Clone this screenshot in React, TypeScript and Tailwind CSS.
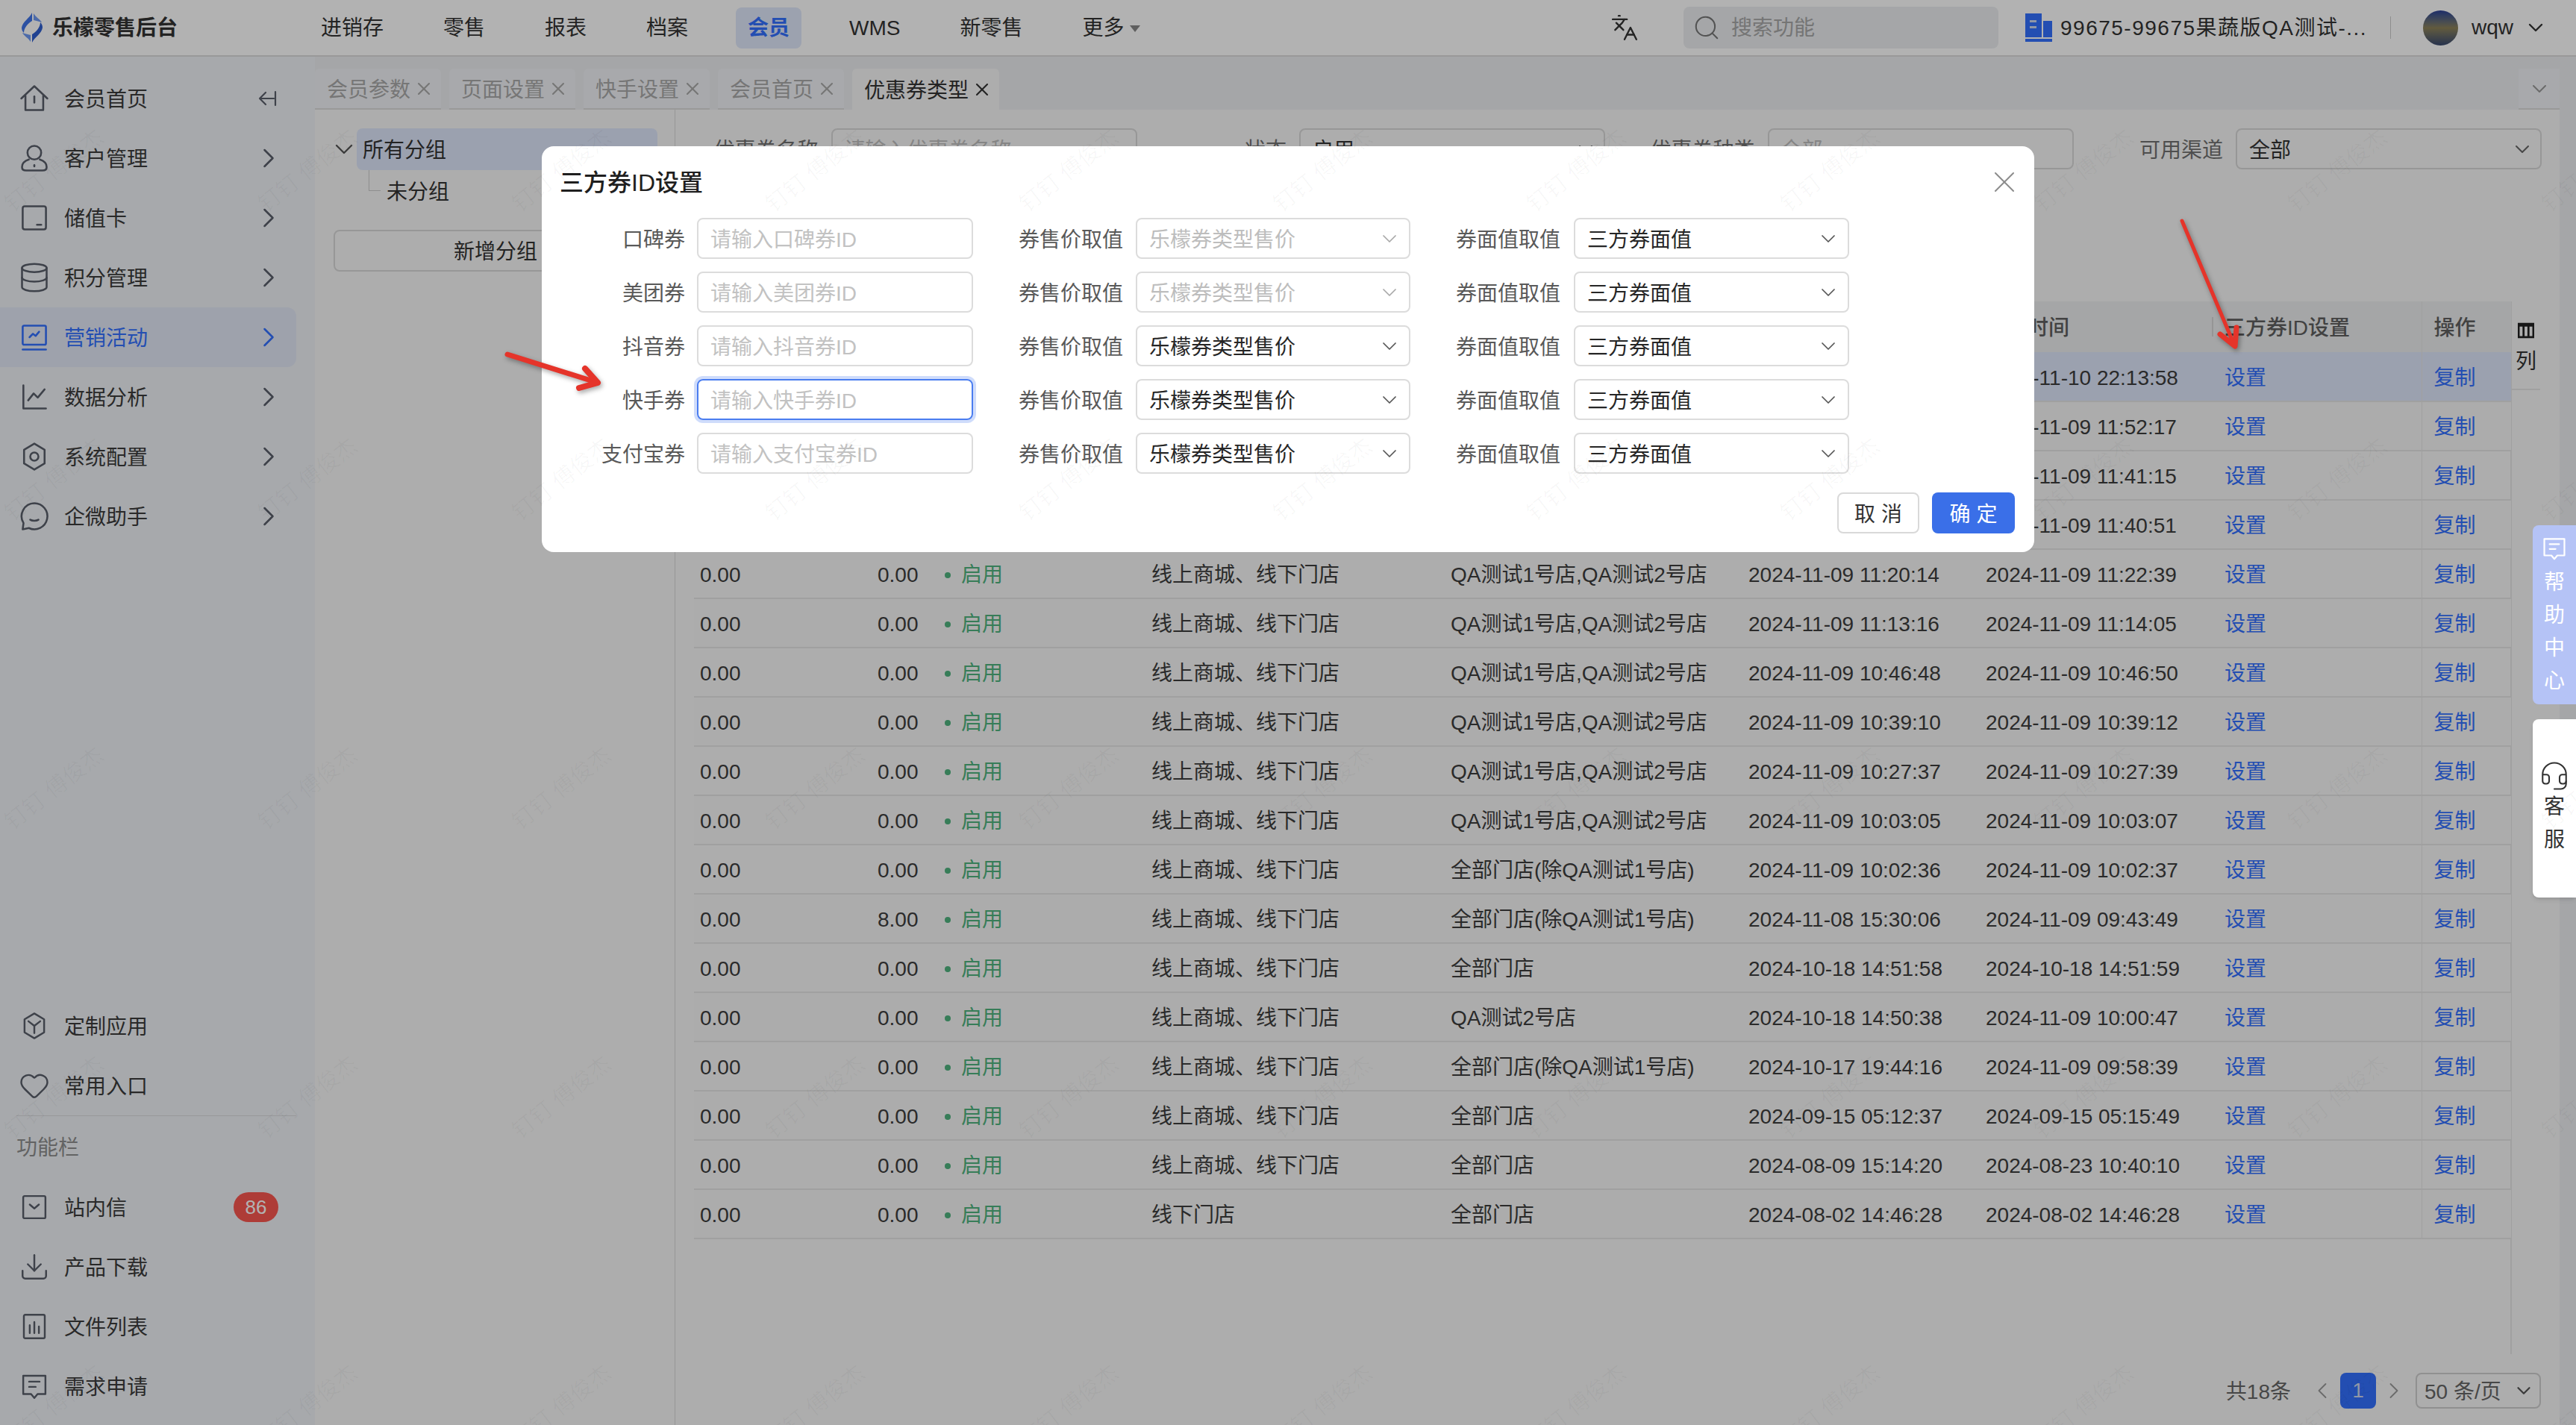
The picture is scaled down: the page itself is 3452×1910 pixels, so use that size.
import { ChevronDown, ChevronLeft, ChevronRight, Database, Download, Headset, Heart, Languages, Search, X } from 'lucide-react'
import type { ReactNode } from 'react'

// Coupon type page of the retail admin, with the third-party coupon ID dialog open on top.

const PRIMARY = 'text-[#3370ff]'

function Ico({ children, className = 'size-[44px]' }: { children: ReactNode; className?: string }) {
  return (
    <svg viewBox="0 0 24 24" fill="none" stroke="currentColor" strokeWidth="1.4" strokeLinecap="round" strokeLinejoin="round" className={`shrink-0 ${className}`}>
      {children}
    </svg>
  )
}

const NAV_TOP: { label: string; icon: ReactNode; active?: boolean; collapse?: boolean }[] = [
  { label: '会员首页', collapse: true, icon: <Ico><path d="M2.5 12 12 3l9.5 9" /><path d="M5.5 10v10.5h13V10" /><path d="M12 10.5v4.5" /></Ico> },
  { label: '客户管理', icon: <Ico><circle cx="12" cy="8" r="5" /><path d="M8 13c-3 1-5 3-5 5.500 0 1.500 1 2.500 3 2.500h12c2 0 3-1 3-2.500 0-2.500-2-4.500-5-5.500" /><path d="M12 17v1" /></Ico> },
  { label: '储值卡', icon: <Ico><rect x="3.500" y="3.500" width="17" height="17" rx="1.500" /><path d="M14 17h3" /></Ico> },
  { label: '积分管理', icon: <Database className="size-[44px] shrink-0" strokeWidth={1.4} /> },
  { label: '营销活动', active: true, icon: <Ico><rect x="3.500" y="3.500" width="17" height="14" rx="1" /><path d="M3.500 21h17" /><path d="m8.500 12 2.500-2.500 2 1.500 2.500-3" /></Ico> },
  { label: '数据分析', icon: <Ico><path d="M4 3.500v17h16.500" /><path d="m7.500 14.500 4-5 3 3 5-6" /></Ico> },
  { label: '系统配置', icon: <Ico><path d="m12 2.500 7.500 4.500v10L12 21.500 4.500 17V7z" /><circle cx="12" cy="12" r="3" /></Ico> },
  { label: '企微助手', icon: <Ico><path d="M12 2.500a9.500 9.500 0 1 1-4 18.100L3.500 21.500l.6-4.500A9.500 9.500 0 0 1 12 2.500z" /><path d="M9 14.500c1.500 1 4.500 1 6 0" /></Ico> },
]

const NAV_APP = [
  { label: '定制应用', icon: <Ico className="size-[42px]"><path d="m12 2.500 7.500 4.500v10L12 21.500 4.500 17V7z" /><path d="m7.500 8.500 4.500 3.500 4.500-3.500M12 12v5.500" /></Ico> },
  { label: '常用入口', icon: <Heart className="size-[42px] shrink-0" strokeWidth={1.4} /> },
]

const NAV_TOOLS: { label: string; icon: ReactNode; badge?: string }[] = [
  { label: '站内信', badge: '86', icon: <Ico className="size-[42px]"><rect x="3.500" y="3.500" width="17" height="17" rx="1" /><path d="m8.500 10 3.500 3 3.500-3" /></Ico> },
  { label: '产品下载', icon: <Download className="size-[42px] shrink-0" strokeWidth={1.4} /> },
  { label: '文件列表', icon: <Ico className="size-[42px]"><rect x="4" y="3" width="16" height="18" rx="1" /><path d="M8.500 11v6M12 8.500V17M15.500 12v5" /></Ico> },
  { label: '需求申请', icon: <Ico className="size-[42px]"><path d="M3.500 4h17v14h-6l-2.500 3-2.500-3h-6z" /><path d="M8 8.500h8M8 12.500h5" /></Ico> },
]

const TOPNAV = ['进销存', '零售', '报表', '档案', '会员', 'WMS', '新零售']
const TABS = ['会员参数', '页面设置', '快手设置', '会员首页', '优惠券类型']

const CITY = 'QA测试1号店,QA测试2号店'
const MIX = '线上商城、线下门店'
const EX = '全部门店(除QA测试1号店)'
const ROWS: [string, string, string, string, string, string][] = [
  ['0.00', '0.00', MIX, CITY, '2024-11-10 22:13:56', '2024-11-10 22:13:58'],
  ['0.00', '0.00', MIX, CITY, '2024-11-09 11:50:20', '2024-11-09 11:52:17'],
  ['0.00', '0.00', MIX, CITY, '2024-11-09 11:41:13', '2024-11-09 11:41:15'],
  ['0.00', '0.00', MIX, CITY, '2024-11-09 11:40:49', '2024-11-09 11:40:51'],
  ['0.00', '0.00', MIX, CITY, '2024-11-09 11:20:14', '2024-11-09 11:22:39'],
  ['0.00', '0.00', MIX, CITY, '2024-11-09 11:13:16', '2024-11-09 11:14:05'],
  ['0.00', '0.00', MIX, CITY, '2024-11-09 10:46:48', '2024-11-09 10:46:50'],
  ['0.00', '0.00', MIX, CITY, '2024-11-09 10:39:10', '2024-11-09 10:39:12'],
  ['0.00', '0.00', MIX, CITY, '2024-11-09 10:27:37', '2024-11-09 10:27:39'],
  ['0.00', '0.00', MIX, CITY, '2024-11-09 10:03:05', '2024-11-09 10:03:07'],
  ['0.00', '0.00', MIX, EX, '2024-11-09 10:02:36', '2024-11-09 10:02:37'],
  ['0.00', '8.00', MIX, EX, '2024-11-08 15:30:06', '2024-11-09 09:43:49'],
  ['0.00', '0.00', MIX, '全部门店', '2024-10-18 14:51:58', '2024-10-18 14:51:59'],
  ['0.00', '0.00', MIX, 'QA测试2号店', '2024-10-18 14:50:38', '2024-11-09 10:00:47'],
  ['0.00', '0.00', MIX, EX, '2024-10-17 19:44:16', '2024-11-09 09:58:39'],
  ['0.00', '0.00', MIX, '全部门店', '2024-09-15 05:12:37', '2024-09-15 05:15:49'],
  ['0.00', '0.00', MIX, '全部门店', '2024-08-09 15:14:20', '2024-08-23 10:40:10'],
  ['0.00', '0.00', '线下门店', '全部门店', '2024-08-02 14:46:28', '2024-08-02 14:46:28'],
]

const COUPONS = [
  { name: '口碑券', dim: true },
  { name: '美团券', dim: true },
  { name: '抖音券' },
  { name: '快手券', focus: true },
  { name: '支付宝券' },
]

function NavRow({ label, icon, active, collapse, chevron, badge }: {
  label: string
  icon: ReactNode
  active?: boolean
  collapse?: boolean
  chevron?: boolean
  badge?: string
}) {
  return (
    <div className={`flex h-[80px] w-[397px] shrink-0 items-center rounded-r-xl pl-[24px] ${active ? 'bg-[#e2e8f7] text-[#3370ff]' : 'text-[#5a5f6b]'}`}>
      <span className="flex w-[44px] justify-center">{icon}</span>
      <span className={`ml-[18px] flex-1 pt-[4px] ${active ? '' : 'text-[#3c3c3c]'}`}>{label}</span>
      {collapse && (
        <svg viewBox="0 0 28 24" fill="none" stroke="currentColor" strokeWidth="2.200" strokeLinecap="round" strokeLinejoin="round" className="mr-[25px] h-[26px] w-[28px]">
          <path d="M12 4 4 12l8 8M4 12h19M25 3v18" />
        </svg>
      )}
      {chevron && <ChevronRight className="mr-[15px] size-[44px]" strokeWidth={1.4} />}
      {badge && (
        <span className="mr-[24px] flex h-[40px] w-[60px] items-center justify-center rounded-full bg-[#fa5750] text-[26px] text-white">{badge}</span>
      )}
    </div>
  )
}

function Sidebar() {
  return (
    <aside className="flex w-[422px] shrink-0 flex-col bg-[#f0f3f7] pt-[16px]">
      {NAV_TOP.map((n) => (
        <NavRow key={n.label} {...n} chevron={!n.collapse} />
      ))}
      <div className="mt-auto">
        {NAV_APP.map((n) => (
          <NavRow key={n.label} {...n} />
        ))}
      </div>
      <div className="ml-[22px] w-[375px] border-t border-[#d8dadd]" />
      <div className="flex h-[82px] items-center pl-[22px] pt-[4px] text-[#8f8f8f]">功能栏</div>
      <div className="pb-[12px]">
        {NAV_TOOLS.map((n) => (
          <NavRow key={n.label} {...n} />
        ))}
      </div>
    </aside>
  )
}

function TopBar() {
  return (
    <header className="flex h-[76px] shrink-0 items-center border-b-2 border-[#dcdcdc] bg-white pl-[29px] pr-[38px]">
      <div className="flex w-[385px] items-center">
        <svg viewBox="0 0 28 40" className="h-[40px] w-[28px]">
          <path d="M14 0C11 7 1 12 0 20c0 3 1 5 3 7 0-7 6-13 11-16z" fill="#3f74e8" />
          <path d="M14 40c3-7 13-12 14-20 0-3-1-5-3-7 0 7-6 13-11 16z" fill="#2f5fd0" />
          <path d="M16 1c3 5 9 8 11 12-3-1-7-2-11-3z" fill="#6f9af2" />
          <path d="M12 39c-3-5-9-8-11-12 3 1 7 2 11 3z" fill="#6f9af2" />
        </svg>
        <span className="ml-[13px] pt-[2px] font-bold text-[#333]">乐檬零售后台</span>
      </div>
      <nav className="flex items-center gap-[48px] text-[#333]">
        {TOPNAV.map((t) => (
          <span key={t} className={`flex h-[55px] items-center rounded-lg px-[16px] pt-[2px] ${t === '会员' ? `bg-[#e0e8fb] font-bold ${PRIMARY}` : ''}`}>
            {t}
          </span>
        ))}
        <span className="flex items-center gap-[7px] pl-[16px] pt-[2px]">
          更多
          <svg viewBox="0 0 14 9" className="h-[9px] w-[14px] fill-[#888]"><path d="M0 0h14L7 9z" /></svg>
        </span>
      </nav>
      <div className="ml-auto flex items-center">
        <Languages className="size-[38px] text-[#333]" strokeWidth={1.500} />
        <div className="ml-[60px] flex h-[56px] w-[422px] items-center rounded-lg bg-[#eceef1] pl-[12px] text-[#a8a8a8]">
          <Search className="size-[38px] text-[#777]" strokeWidth={1.300} />
          <span className="ml-[14px] pt-[2px]">搜索功能</span>
        </div>
        <svg viewBox="0 0 36 38" className="ml-[36px] h-[38px] w-[36px] fill-[#3370ff]">
          <path d="M0 0h22v32H0zM24 10h12v22H24zM0 34h36v4H0z" />
          <path d="M6 9h9v3H6zM6 17h9v3H6z" fill="#cfd8ee" />
        </svg>
        <span className="ml-[11px] w-[442px] pt-[2px] tracking-[1.500px] text-[#333]">99675-99675果蔬版QA测试-...</span>
        <span className="h-[30px] border-l border-[#ccc]" />
        <span className="ml-[43px] size-[47px] rounded-full bg-gradient-to-b from-[#2c3f96] via-[#8d8258] to-[#38486e]" />
        <span className="ml-[18px] text-[#333]">wqw</span>
        <ChevronDown className="ml-[14px] size-[32px] text-[#333]" strokeWidth={1.800} />
      </div>
    </header>
  )
}

function Tabs() {
  return (
    <div className="flex h-[71px] shrink-0 items-end gap-[11px] bg-[#eceef1]">
      {TABS.map((t, i) => {
        const on = i === TABS.length - 1
        return (
          <div key={t} className={`flex h-[55px] items-center rounded-t-md pl-[16px] pr-[9px] ${on ? 'bg-[#f8f8f8] text-[#333]' : 'border-b-2 border-[#dcdcdc] bg-[#f1f3f6] text-[#a9a9a9]'}`}>
            <span className="pt-[4px]">{t}</span>
            <X className="ml-[4px] size-[28px]" strokeWidth={1.800} />
          </div>
        )
      })}
      <div className="ml-auto mr-[22px] flex h-[55px] w-[55px] items-center justify-center border-b-2 border-[#dcdcdc] bg-[#f1f3f6] text-[#999]">
        <ChevronDown className="size-[32px]" strokeWidth={1.500} />
      </div>
    </div>
  )
}

function TreePanel() {
  return (
    <div className="relative w-[483px] shrink-0 border-r border-[#d9d9d9] pt-[25px]">
      <div className="flex h-[56px] items-center">
        <ChevronDown className="ml-[19px] size-[40px] text-[#555]" strokeWidth={1.400} />
        <div className="ml-[-3px] flex h-[56px] w-[403px] items-center rounded-lg bg-[#dfe7fb] pl-[8px] pt-[4px] text-[#333]">所有分组</div>
      </div>
      <div className="flex h-[56px] items-center">
        <span className="ml-[72px] h-[28px] w-[16px] -translate-y-[14px] border-b border-l border-[#ccc]" />
        <span className="ml-[8px] pt-[4px] text-[#333]">未分组</span>
      </div>
      <div className="ml-[25px] mt-[24px] flex h-[56px] w-[434px] items-center justify-center rounded-lg border-2 border-[#d9d9d9] pt-[4px] text-[#333]">新增分组</div>
    </div>
  )
}

function FilterGroup({ label, value, hint, select }: { label: string; value?: string; hint?: string; select?: boolean }) {
  return (
    <div className="flex w-[627.500px] shrink-0 items-center justify-end">
      <span className="mr-[17px] pt-[4px] text-[#707070]">{label}</span>
      <div className="flex h-[55px] w-[410px] items-center justify-between rounded-lg border-2 border-[#d9d9d9] pl-[16px] pr-[8px]">
        <span className={`pt-[4px] ${value ? 'text-[#333]' : 'text-[#bfbfbf]'}`}>{value ?? hint}</span>
        {select && <ChevronDown className="size-[32px] text-[#666]" strokeWidth={1.500} />}
      </div>
    </div>
  )
}

function TableArea() {
  return (
    <div className="flex h-[1411px] shrink-0 items-start pl-[25px]">
      <div className="h-full w-[2436px] border-r-2 border-[#e6e6e6]">
        <table className="w-[2435px] table-fixed border-collapse">
          <colgroup>
            <col className="w-[238px]" />
            <col className="w-[90px]" />
            <col className="w-[277px]" />
            <col className="w-[401px]" />
            <col className="w-[399px]" />
            <col className="w-[318px]" />
            <col className="w-[320px]" />
            <col className="w-[272px]" />
            <col className="w-[120px]" />
          </colgroup>
          <thead>
            <tr className="h-[68px] bg-[#eceeef] text-left text-[#5f5f5f] [&>th]:pt-[4px] [&>th]:font-medium">
              <th className="pl-2">优惠金额</th>
              <th className="pl-2">门槛</th>
              <th className="pl-2">状态</th>
              <th className="pl-2">可用渠道</th>
              <th className="pl-2">可用门店</th>
              <th className="pl-2">创建时间</th>
              <th className="pl-2">更新时间</th>
              <th className="relative pl-2">
                <span className="absolute left-[-9px] top-[21px] h-[26px] border-l-2 border-[#d6d6d6]" />
                三方券ID设置
              </th>
              <th className="relative border-l border-[#e6e6e6] pl-[16px]">操作</th>
            </tr>
          </thead>
          <tbody className="text-[#3d3d3d]">
            {ROWS.map((r, i) => (
              <tr key={i} className={`h-[66px] border-b-2 border-[#e6e6e6] [&>td]:pt-[4px] ${i === 0 ? 'bg-[#dfe7fb]' : i % 2 ? 'bg-[#f6f6f6]' : ''}`}>
                <td className="pl-2">{r[0]}</td>
                <td className="pl-2">{r[1]}</td>
                <td className="pl-2">
                  <span className="flex items-center text-[#4fb37f]">
                    <span className="size-[8px] rounded-full bg-[#4fb37f]" />
                    <span className="ml-[14px]">启用</span>
                  </span>
                </td>
                <td className="whitespace-nowrap pl-2">{r[2]}</td>
                <td className="whitespace-nowrap pl-2">{r[3]}</td>
                <td className="whitespace-nowrap pl-2">{r[4]}</td>
                <td className="whitespace-nowrap pl-2">{r[5]}</td>
                <td className={`pl-2 ${PRIMARY}`}>设置</td>
                <td className={`border-l border-[#e6e6e6] pl-[16px] ${PRIMARY}`}>复制</td>
              </tr>
            ))}
          </tbody>
        </table>
      </div>
      <div className="flex h-[119px] w-[38px] flex-col items-center border-b-2 border-[#e6e6e6] pt-[28px] text-[#333]">
        <svg viewBox="0 0 20 20" className="size-[22px] fill-none stroke-[#222] stroke-[2.500]">
          <path d="M1 2h18v16H1zM7 2v16M13 2v16M1 4h18" />
        </svg>
        <span className="mt-[10px]">列</span>
      </div>
    </div>
  )
}

function Pager() {
  return (
    <div className="mt-[25px] flex h-[48px] items-center justify-end pr-[25px] text-[#666]">
      <span className="pt-[4px]">共18条</span>
      <ChevronLeft className="ml-[24px] size-[36px] text-[#999]" strokeWidth={1.200} />
      <span className="ml-[6px] flex h-[48px] w-[48px] items-center justify-center rounded-lg bg-[#3370ff] text-[#cfd8f0]">1</span>
      <ChevronRight className="ml-[6px] size-[36px] text-[#999]" strokeWidth={1.200} />
      <div className="ml-[11px] flex h-[48px] w-[168px] items-center justify-between rounded-lg border-2 border-[#cfcfcf] pl-[10px] pr-[6px]">
        <span className="pt-[4px]">50 条/页</span>
        <ChevronDown className="size-[30px] text-[#555]" strokeWidth={1.800} />
      </div>
    </div>
  )
}

function Page() {
  return (
    <div className="flex min-h-0 flex-1">
      <Sidebar />
      <main className="flex min-w-0 flex-1 flex-col bg-[#eceef1]">
        <Tabs />
        <div className="mr-[22px] flex min-h-0 flex-1 bg-[#f8f8f8]">
          <TreePanel />
          <div className="relative min-w-0 flex-1 pt-[25px]">
            <div className="flex h-[55px] justify-end pr-[24px]">
              <FilterGroup label="优惠券名称" hint="请输入优惠券名称" />
              <FilterGroup label="状态" value="启用" select />
              <FilterGroup label="优惠券种类" hint="全部" />
              <FilterGroup label="可用渠道" value="全部" select />
            </div>
            <div className="mt-[177px]">
              <TableArea />
              <Pager />
            </div>
          </div>
        </div>
      </main>
    </div>
  )
}

function CouponRow({ name, dim, focus }: { name: string; dim?: boolean; focus?: boolean }) {
  return (
    <div className="flex h-[55px] items-center text-[#595959]">
      <span className="w-[192px] pt-[4px] text-right">{name}</span>
      <input
        readOnly
        placeholder={`请输入${name}ID`}
        className={`ml-[16px] h-[55px] w-[370px] rounded-lg border-2 px-[16px] pt-[4px] outline-none placeholder:text-[#c2c2c2] ${focus ? 'border-[#4a7df0] ring-4 ring-[#cfdcfb]' : 'border-[#dcdcdc]'}`}
      />
      <span className="w-[201px] pt-[4px] text-right">券售价取值</span>
      <div className="ml-[17px] flex h-[55px] w-[368px] items-center justify-between rounded-lg border-2 border-[#dcdcdc] pl-[16px] pr-[10px]">
        <span className={`pt-[4px] ${dim ? 'text-[#bdbdbd]' : 'text-[#262626]'}`}>乐檬券类型售价</span>
        <ChevronDown className={`size-[32px] ${dim ? 'text-[#a8a8a8]' : 'text-[#555]'}`} strokeWidth={1.300} />
      </div>
      <span className="w-[201px] pt-[4px] text-right">券面值取值</span>
      <div className="ml-[18px] flex h-[55px] w-[369px] items-center justify-between rounded-lg border-2 border-[#dcdcdc] pl-[16px] pr-[10px]">
        <span className="pt-[4px] text-[#262626]">三方券面值</span>
        <ChevronDown className="size-[32px] text-[#555]" strokeWidth={1.300} />
      </div>
    </div>
  )
}

function Dialog() {
  return (
    <div className="absolute inset-0 flex justify-center bg-black/30 pt-[196px]">
      <div className="h-[544px] w-[2000px] rounded-2xl bg-white">
        <div className="flex h-[96px] items-center justify-between pl-[24px] pr-[16px]">
          <span className="pt-[2px] text-[32px] font-medium text-[#1f1f1f]">三方券ID设置</span>
          <X className="size-[48px] text-[#8c8c8c]" strokeWidth={1} />
        </div>
        <div className="flex flex-col gap-[17px]">
          {COUPONS.map((c) => (
            <CouponRow key={c.name} {...c} />
          ))}
        </div>
        <div className="mt-[25px] flex justify-end gap-[17px] pr-[26px]">
          <button className="h-[55px] w-[110px] rounded-lg border-2 border-[#d9d9d9] bg-white pt-[4px] text-[#333]">取 消</button>
          <button className="h-[55px] w-[111px] rounded-lg bg-[#3a6fe8] pt-[4px] text-white">确 定</button>
        </div>
      </div>
    </div>
  )
}

function SideWidgets() {
  return (
    <>
      <div className="absolute right-0 top-[704px] flex h-[240px] w-[58px] flex-col items-center rounded-l-lg bg-[#b5c3f6] pt-[12px] text-white">
        <Ico className="size-[38px]"><path d="M3.500 4h17v14h-6l-2.500 3-2.500-3h-6z" /><path d="M8 8.500h8M8 12.500h5" /></Ico>
        <span className="mt-[9px] flex flex-col gap-[8px] leading-[36px]">
          <span>帮</span><span>助</span><span>中</span><span>心</span>
        </span>
      </div>
      <div className="absolute right-0 top-[964px] flex h-[239px] w-[58px] flex-col items-center rounded-l-lg bg-white pt-[55px] text-[#333] shadow-md">
        <Headset className="size-[42px] shrink-0" strokeWidth={1.200} />
        <span className="mt-[3px] flex flex-col gap-[8px] leading-[36px]">
          <span>客</span><span>服</span>
        </span>
      </div>
    </>
  )
}

function Arrows() {
  return (
    <svg viewBox="0 0 3452 1910" className="pointer-events-none absolute inset-0 h-full w-full drop-shadow-[2px_3px_3px_rgba(0,0,0,0.35)]">
      <g fill="none" stroke="#e5342a" strokeLinecap="round" strokeLinejoin="round">
        <path d="M2924 296 2993 460" strokeWidth="5" />
        <path d="M2975 448 2995 464 2997 439" strokeWidth="7" />
        <path d="M680 475 798 512" strokeWidth="7" />
        <path d="M784 494 801 513 776 520" strokeWidth="8" />
      </g>
    </svg>
  )
}

// The faint "钉钉 傅俊杰" marks that lie over the whole capture.
function Watermark() {
  return (
    <div className="pointer-events-none absolute -left-[98px] top-[21px] grid grid-cols-[repeat(11,340px)] grid-rows-[repeat(5,414px)] text-[30px] text-black/[0.03]">
      {Array.from({ length: 55 }, (_, i) => (
        <span key={i} className="flex -rotate-[38deg] items-center justify-center whitespace-nowrap">钉钉 傅俊杰</span>
      ))}
    </div>
  )
}

export default function App() {
  return (
    <div className="relative flex h-screen w-full flex-col overflow-hidden bg-white text-[28px] [font-family:'Liberation_Sans','Noto_Sans_CJK_SC',sans-serif]">
      <TopBar />
      <Page />
      <Dialog />
      <SideWidgets />
      <Arrows />
      <Watermark />
    </div>
  )
}
